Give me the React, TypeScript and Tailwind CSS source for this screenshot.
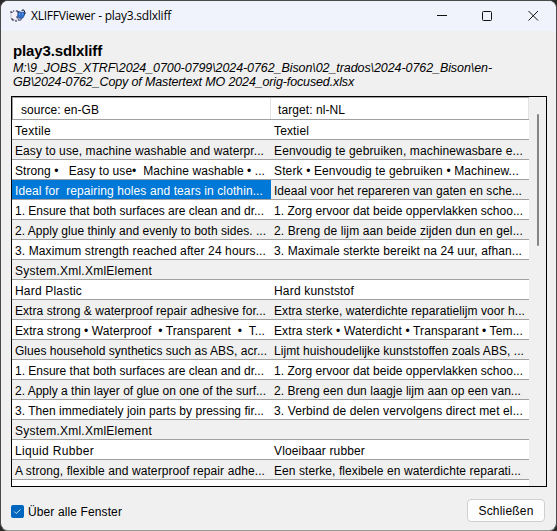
import { useLayoutEffect, useRef, useState } from 'react';

type FitProps = { text: string; width: number; className?: string };

// Spreads the letters of a single line so that it fills the given width.
function Fit({ text, width, className = '' }: FitProps) {
  const ref = useRef<HTMLSpanElement>(null);
  const [spacing, setSpacing] = useState(0);
  useLayoutEffect(() => {
    if (!ref.current || !width) return;
    const natural = ref.current.getBoundingClientRect().width - spacing * text.length;
    setSpacing((width - natural) / text.length);
  }, [text, width]);
  return (
    <span ref={ref} className={`inline-block whitespace-pre ${className}`} style={{ letterSpacing: `${spacing}px` }}>
      {text}
    </span>
  );
}

const rows: [string, number, string, number][] = [
  ['Textile', 36, 'Textiel', 35],
  ['Easy to use, machine washable and waterpr...', 249, 'Eenvoudig te gebruiken, machinewasbare e...', 249],
  ['Strong •   Easy to use•  Machine washable • ...', 250, 'Sterk • Eenvoudig te gebruiken • Machinew...', 245],
  ['Ideal for  repairing holes and tears in clothin...', 248, 'Ideaal voor het repareren van gaten en sche...', 248],
  ['1. Ensure that both surfaces are clean and dr...', 249, '1. Zorg ervoor dat beide oppervlakken schoo...', 249],
  ['2. Apply glue thinly and evenly to both sides. ...', 251, '2. Breng de lijm aan beide zijden dun en gel...', 249],
  ['3. Maximum strength reached after 24 hours...', 251, '3. Maximale sterkte bereikt na 24 uur, afhan...', 248],
  ['System.Xml.XmlElement', 137, '', 0],
  ['Hard Plastic', 67, 'Hard kunststof', 80],
  ['Extra strong & waterproof repair adhesive for...', 251, 'Extra sterke, waterdichte reparatielijm voor h...', 251],
  ['Extra strong • Waterproof  • Transparent  •  T...', 250, 'Extra sterk • Waterdicht • Transparant • Tem...', 249],
  ['Glues household synthetics such as ABS, acr...', 252, 'Lijmt huishoudelijke kunststoffen zoals ABS, ...', 250],
  ['1. Ensure that both surfaces are clean and dr...', 249, '1. Zorg ervoor dat beide oppervlakken schoo...', 249],
  ['2. Apply a thin layer of glue on one of the surf...', 251, '2. Breng een dun laagje lijm aan op een van...', 247],
  ['3. Then immediately join parts by pressing fir...', 249, '3. Verbind de delen vervolgens direct met el...', 249],
  ['System.Xml.XmlElement', 137, '', 0],
  ['Liquid Rubber', 79, 'Vloeibaar rubber', 91],
  ['A strong, flexible and waterproof repair adhe...', 250, 'Een sterke, flexibele en waterdichte reparati...', 247],
];

function SheepIcon() {
  return (
    <svg width="17" height="14" viewBox="0 0 17 14" className="shrink-0">
      <path d="M2 4 4 2h5l2 3v4l-2 2H4L2 9.5Z" fill="#f4f2f8" stroke="#a9a6bf" strokeWidth=".6" />
      <path d="M1 3h2v1M3 9v2h2M6 12h2M9 11h3M4 2h1M7 2h2" fill="none" stroke="#252742" />
      <path d="M9 3.5 11 3l2 .2L15.5 3v3L14 9l-3 .5L8.5 7Z" fill="#2f6fcb" stroke="#1c3f89" strokeWidth=".6" />
      <path d="M8 3h2V2M13 2V1h2v1l1 1v2h-1" fill="none" stroke="#17264d" />
      <path d="M8 7v2h2M12 10h1" fill="none" stroke="#172b60" />
      <path d="M10 5h1m2 0h1" stroke="#8bc5f4" />
    </svg>
  );
}

export default function App() {
  return (
    <div className="h-[531px] w-[557px] overflow-hidden bg-[#282828] font-['Liberation_Sans',Arial,sans-serif] text-[12px] text-black">
      <main className="flex h-[531px] w-[557px] flex-col overflow-hidden rounded-lg border border-[#4a4a4c] border-b-[#999] bg-[#f0f0f0]">
        <header className="flex h-[30px] shrink-0 items-center bg-[#f0f3fb] pl-2">
          <SheepIcon />
          <h1 className="ml-[5px] flex h-[30px] flex-1 items-center font-['Open_Sans','Noto_Sans',sans-serif] text-[12px]">
            <Fit text="XLIFFViewer - play3.sdlxliff" width={140} />
          </h1>
          <div className="flex h-[30px] items-center pr-[17px]">
            <svg width="103" height="12" viewBox="0 0 103 12" fill="none" stroke="#111">
              <path d="M1 5.5h10" />
              <rect x="46.5" y="1.5" width="9" height="9" rx="1" />
              <path d="m92.5 1 9.5 9.5m0-9.5-9.5 9.5" />
            </svg>
          </div>
        </header>

        <section className="h-[65px] shrink-0 pl-3 pt-[10px]">
          <h2 className="h-[20px] text-[15px] font-bold leading-[20px]"><Fit text="play3.sdlxliff" width={89} /></h2>
          <div className="h-[14px] text-[12.5px] italic leading-[14px]">
            <Fit text="M:\9_JOBS_XTRF\2024_0700-0799\2024-0762_Bison\02_trados\2024-0762_Bison\en-" width={479} />
          </div>
          <div className="h-[14px] text-[12.5px] italic leading-[14px]">
            <Fit text="GB\2024-0762_Copy of Mastertext MO 2024_orig-focused.xlsx" width={341} />
          </div>
        </section>

        <section className="ml-[10px] flex h-[391px] w-[536px] shrink-0 border border-black bg-white">
          <div className="w-[517px]">
            <div className="flex h-[23px] border-b border-t border-[#a0a0a0] leading-[24px]">
              <div className="w-[259px] border-l border-r border-l-[#a0a0a0] border-r-[#e2e2e2] pl-[8px]"><Fit text="source: en-GB" width={78} /></div>
              <div className="flex-1 border-r border-[#e2e2e2] pl-[7px]"><Fit text="target: nl-NL" width={67} /></div>
            </div>
            {rows.map(([source, sourceWidth, target, targetWidth], i) => (
              <div key={i} className={`flex h-5 border-b border-[#a0a0a0] leading-[22px] ${i % 2 ? 'bg-[#f0f0f0]' : 'bg-white'}`}>
                <div className={`h-[19px] w-[259px] pl-[3px] ${i === 3 ? 'bg-[#0078d7] text-white' : ''}`}><Fit text={source} width={sourceWidth} /></div>
                <div className="h-[19px] flex-1 pl-[3px]"><Fit text={target} width={targetWidth} /></div>
              </div>
            ))}
          </div>
          <div className="flex flex-1 justify-center bg-[#f0f0f0] pl-px pt-[17px]">
            <div className="h-[132px] w-[2px] rounded-full bg-[#858585]" />
          </div>
        </section>

        <footer className="flex flex-1 justify-between pl-[10px] pr-[11px] pt-[12px]">
          <label className="flex h-[25px] items-center">
            <span className="flex size-[13px] items-center justify-center rounded-[2px] bg-[#0067c0]">
              <svg width="9" height="9" viewBox="0 0 9 9" fill="none" stroke="white" strokeWidth=".8"><path d="m1.2 4.5 2 2L7.5 2.5" /></svg>
            </span>
            <span className="ml-1"><Fit text="Über alle Fenster" width={94} /></span>
          </label>
          <button className="flex h-[23px] w-[78px] items-center justify-center rounded-[4px] border border-[#cfcfcf] bg-[#fdfdfd]">
            <Fit text="Schließen" width={55} />
          </button>
        </footer>
      </main>
    </div>
  );
}
